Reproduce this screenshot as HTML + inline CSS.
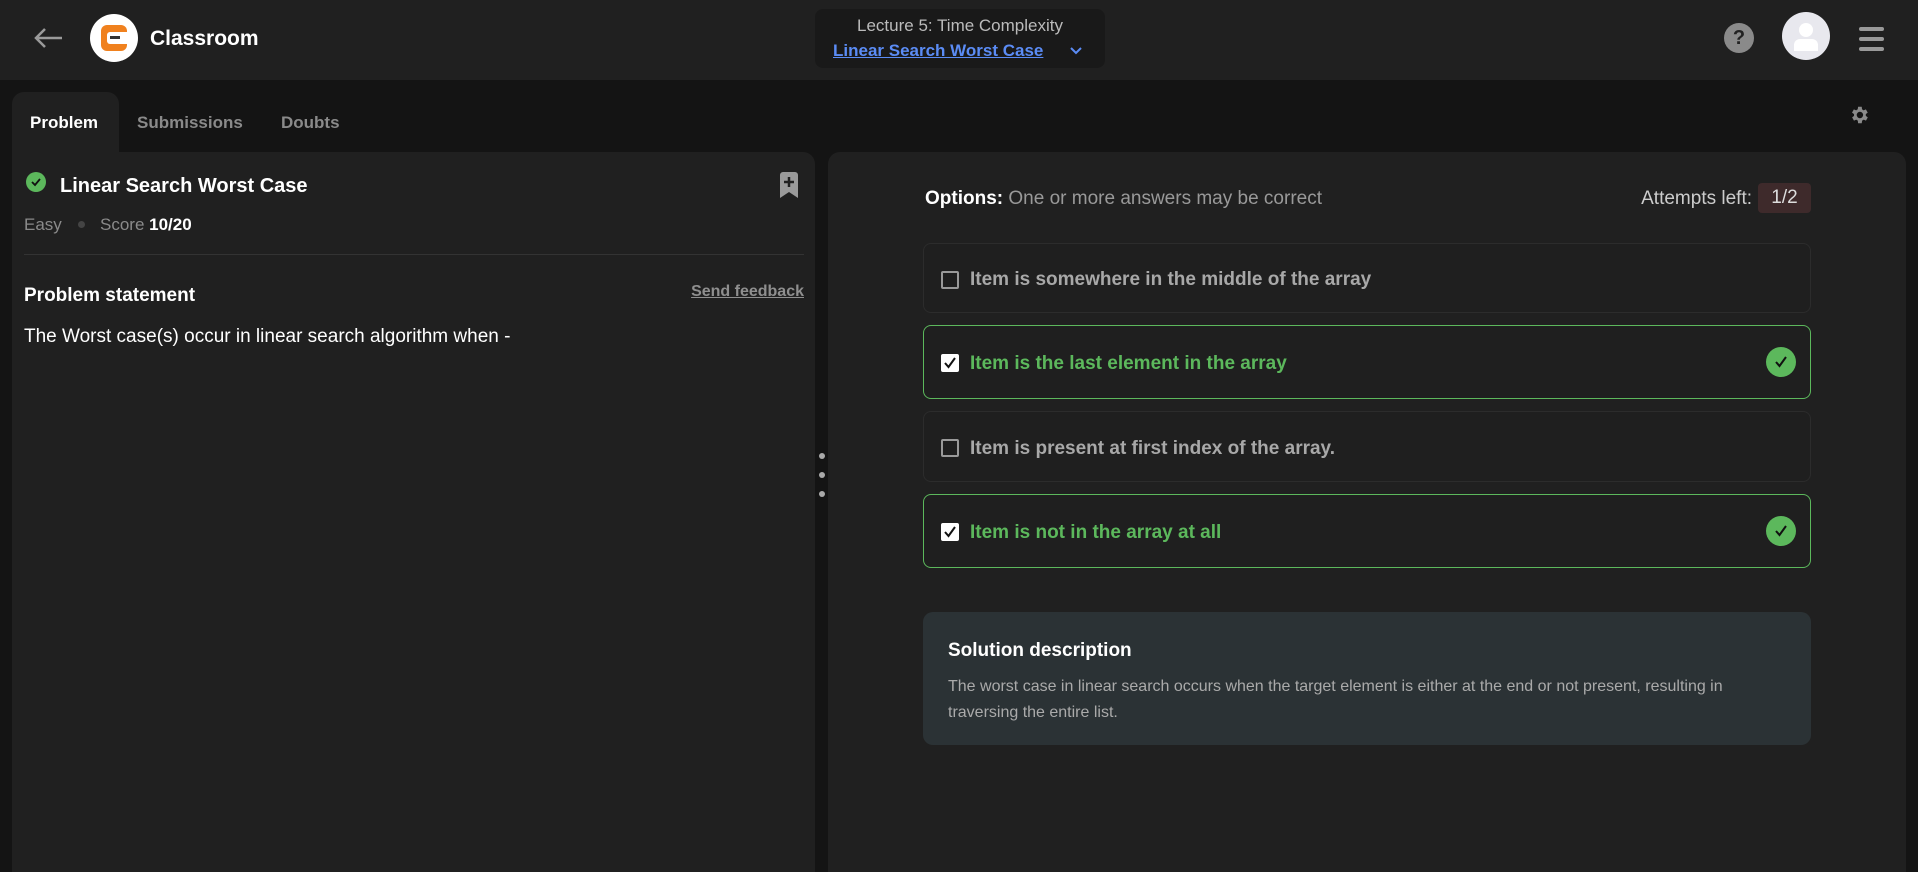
<!DOCTYPE html>
<html><head><meta charset="utf-8"><style>
*{box-sizing:border-box;margin:0;padding:0}
body{width:1918px;height:865px;background:#141414;font-family:"Liberation Sans",sans-serif;color:#fff;position:relative;overflow:hidden}
.a{position:absolute}
.hdr{left:0;top:0;width:1918px;height:80px;background:#202020}
.opt{position:absolute;left:923px;width:888px;border:1px solid #2c2c2c;border-radius:8px;background:#1f1f1f}
.opt.ok{border-color:#5cb85c}
.opt .cb{position:absolute;left:17px;width:18px;height:18px;border:2px solid #9a9a9a;border-radius:2px}
.opt.ok .cb{background:#fff;border-color:#fff}
.opt .t{position:absolute;left:46px;font-size:19px;font-weight:bold;color:#a8a8a8;white-space:nowrap}
.opt.ok .t{color:#5cb85c}
.opt .c{position:absolute;right:14px;width:30px;height:30px;border-radius:50%;background:#5cb85c}
</style></head><body>
<div class="a hdr"></div>
<svg class="a" style="left:32px;top:26px" width="32" height="24" viewBox="0 0 32 24"><path d="M30 12H4M13 3L4 12l9 9" stroke="#9a9a9a" stroke-width="2.5" fill="none"/></svg>
<div class="a" style="left:90px;top:14px;width:48px;height:48px;border-radius:50%;background:#fff"></div>
<div class="a" style="left:101px;top:25px;width:26px;height:26px;border-radius:6px;background:#f0811e"></div>
<div class="a" style="left:107px;top:32px;width:20px;height:12px;background:#fff;border-radius:3px 0 0 3px"></div>
<div class="a" style="left:110px;top:36px;width:10px;height:3px;background:#333"></div>
<div class="a" style="left:150px;top:27px;font-size:21px;font-weight:bold">Classroom</div>
<div class="a" style="left:815px;top:9px;width:290px;height:59px;background:#191919;border-radius:8px"></div>
<div class="a" style="left:815px;top:16px;width:290px;text-align:center;font-size:17px;color:#bbb">Lecture 5: Time Complexity</div>
<div class="a" style="left:833px;top:41px;font-size:17px;font-weight:bold;color:#5b8cf5;text-decoration:underline">Linear Search Worst Case</div>
<svg class="a" style="left:1069px;top:46px" width="14" height="10"><path d="M2 2l5 5 5-5" stroke="#5b8cf5" stroke-width="2" fill="none"/></svg>
<div class="a" style="left:1724px;top:23px;width:30px;height:30px;border-radius:50%;background:#8a8a8a;color:#222;font-weight:bold;font-size:20px;text-align:center;line-height:30px">?</div>
<div class="a" style="left:1782px;top:12px;width:48px;height:48px;border-radius:50%;background:#e8e8ee;overflow:hidden">
<div class="a" style="left:17px;top:11px;width:14px;height:14px;border-radius:50%;background:#fff"></div>
<div class="a" style="left:12px;top:27px;width:24px;height:12px;border-radius:6px 6px 0 0;background:#fff"></div></div>
<div class="a" style="left:1859px;top:27px;width:25px;height:4px;background:#999;border-radius:2px"></div>
<div class="a" style="left:1859px;top:37px;width:25px;height:4px;background:#999;border-radius:2px"></div>
<div class="a" style="left:1859px;top:47px;width:25px;height:4px;background:#999;border-radius:2px"></div>

<div class="a" style="left:12px;top:92px;width:107px;height:62px;background:#202020;border-radius:12px 12px 0 0"></div>
<div class="a" style="left:30px;top:113px;font-size:17px;font-weight:bold">Problem</div>
<div class="a" style="left:137px;top:113px;font-size:17px;font-weight:bold;color:#8a8a8a">Submissions</div>
<div class="a" style="left:281px;top:113px;font-size:17px;font-weight:bold;color:#8a8a8a">Doubts</div>
<svg class="a" style="left:1848px;top:104px" width="22" height="22" viewBox="0 0 24 24"><path fill="#8a8a8a" d="M19.4 13a7.5 7.5 0 0 0 0-2l2.1-1.6-2-3.5-2.5 1a7 7 0 0 0-1.7-1L15 3h-4l-.4 2.9a7 7 0 0 0-1.7 1l-2.5-1-2 3.5L6.6 11a7.5 7.5 0 0 0 0 2l-2.1 1.6 2 3.5 2.5-1a7 7 0 0 0 1.7 1L11 21h4l.4-2.9a7 7 0 0 0 1.7-1l2.5 1 2-3.5zM13 15.5a3.5 3.5 0 1 1 0-7 3.5 3.5 0 0 1 0 7z"/></svg>

<div class="a" style="left:12px;top:152px;width:803px;height:720px;background:#202020;border-radius:0 12px 0 0"></div>
<div class="a" style="left:26px;top:172px;width:20px;height:20px;border-radius:50%;background:#5cb85c"></div>
<svg class="a" style="left:30px;top:176px" width="12" height="12"><path d="M2 6l3 3 5-6" stroke="#111" stroke-width="1.8" fill="none"/></svg>
<div class="a" style="left:60px;top:175px;font-size:20px;font-weight:bold">Linear Search Worst Case</div>
<svg class="a" style="left:778px;top:172px" width="22" height="26" viewBox="0 0 22 26"><path d="M2 3a3 3 0 0 1 3-3h12a3 3 0 0 1 3 3v23l-9-6-9 6z" fill="#9a9a9a"/><path d="M11 5v10M6 10h10" stroke="#202020" stroke-width="2.5"/></svg>
<div class="a" style="left:24px;top:215px;font-size:17px;color:#8a8a8a">Easy</div>
<div class="a" style="left:78px;top:221px;width:7px;height:7px;border-radius:50%;background:#444"></div>
<div class="a" style="left:100px;top:215px;font-size:17px;color:#8a8a8a">Score <b style="color:#fff">10/20</b></div>
<div class="a" style="left:24px;top:254px;width:780px;height:1px;background:#333"></div>
<div class="a" style="left:24px;top:285px;font-size:19px;font-weight:bold">Problem statement</div>
<div class="a" style="right:1114px;top:283px;font-size:16px;font-weight:bold;color:#8f8f8f;text-decoration:underline">Send feedback</div>
<div class="a" style="left:24px;top:326px;font-size:19px">The Worst case(s) occur in linear search algorithm when -</div>
<div class="a" style="left:819px;top:453px;width:6px;height:6px;border-radius:50%;background:#aaa"></div>
<div class="a" style="left:819px;top:472px;width:6px;height:6px;border-radius:50%;background:#aaa"></div>
<div class="a" style="left:819px;top:491px;width:6px;height:6px;border-radius:50%;background:#aaa"></div>

<div class="a" style="left:828px;top:152px;width:1078px;height:720px;background:#202020;border-radius:12px 12px 0 0"></div>
<div class="a" style="left:925px;top:188px;font-size:19px;color:#999"><b style="color:#fff">Options:</b> One or more answers may be correct</div>
<div class="a" style="right:166px;top:188px;font-size:19px;color:#ccc">Attempts left:</div>
<div class="a" style="left:1758px;top:183px;width:53px;height:30px;background:#3e2a2b;border-radius:4px;font-size:19px;text-align:center;line-height:30px;color:#ddd">1/2</div>

<div class="opt" style="top:243px;height:70px"><div class="cb" style="top:27px"></div><div class="t" style="top:25px">Item is somewhere in the middle of the array</div></div>
<div class="opt ok" style="top:325px;height:74px"><div class="cb" style="top:28px"></div><svg class="a" style="left:19px;top:30px" width="14" height="14"><path d="M2 7l3.5 4L12 2" stroke="#111" stroke-width="2" fill="none"/></svg><div class="t" style="top:27px">Item is the last element in the array</div><div class="c" style="top:21px"></div><svg class="a" style="right:22px;top:29px" width="14" height="14"><path d="M2 7l3.5 4L12 2" stroke="#111" stroke-width="2" fill="none"/></svg></div>
<div class="opt" style="top:411px;height:71px"><div class="cb" style="top:27px"></div><div class="t" style="top:26px">Item is present at first index of the array.</div></div>
<div class="opt ok" style="top:494px;height:74px"><div class="cb" style="top:28px"></div><svg class="a" style="left:19px;top:30px" width="14" height="14"><path d="M2 7l3.5 4L12 2" stroke="#111" stroke-width="2" fill="none"/></svg><div class="t" style="top:27px">Item is not in the array at all</div><div class="c" style="top:21px"></div><svg class="a" style="right:22px;top:29px" width="14" height="14"><path d="M2 7l3.5 4L12 2" stroke="#111" stroke-width="2" fill="none"/></svg></div>

<div class="a" style="left:923px;top:612px;width:888px;height:133px;background:#2b3235;border-radius:10px"></div>
<div class="a" style="left:948px;top:640px;font-size:19px;font-weight:bold">Solution description</div>
<div class="a" style="left:948px;top:674px;width:800px;font-size:16px;line-height:26px;color:#aaa">The worst case in linear search occurs when the target element is either at the end or not present, resulting in traversing the entire list.</div>
</body></html>
